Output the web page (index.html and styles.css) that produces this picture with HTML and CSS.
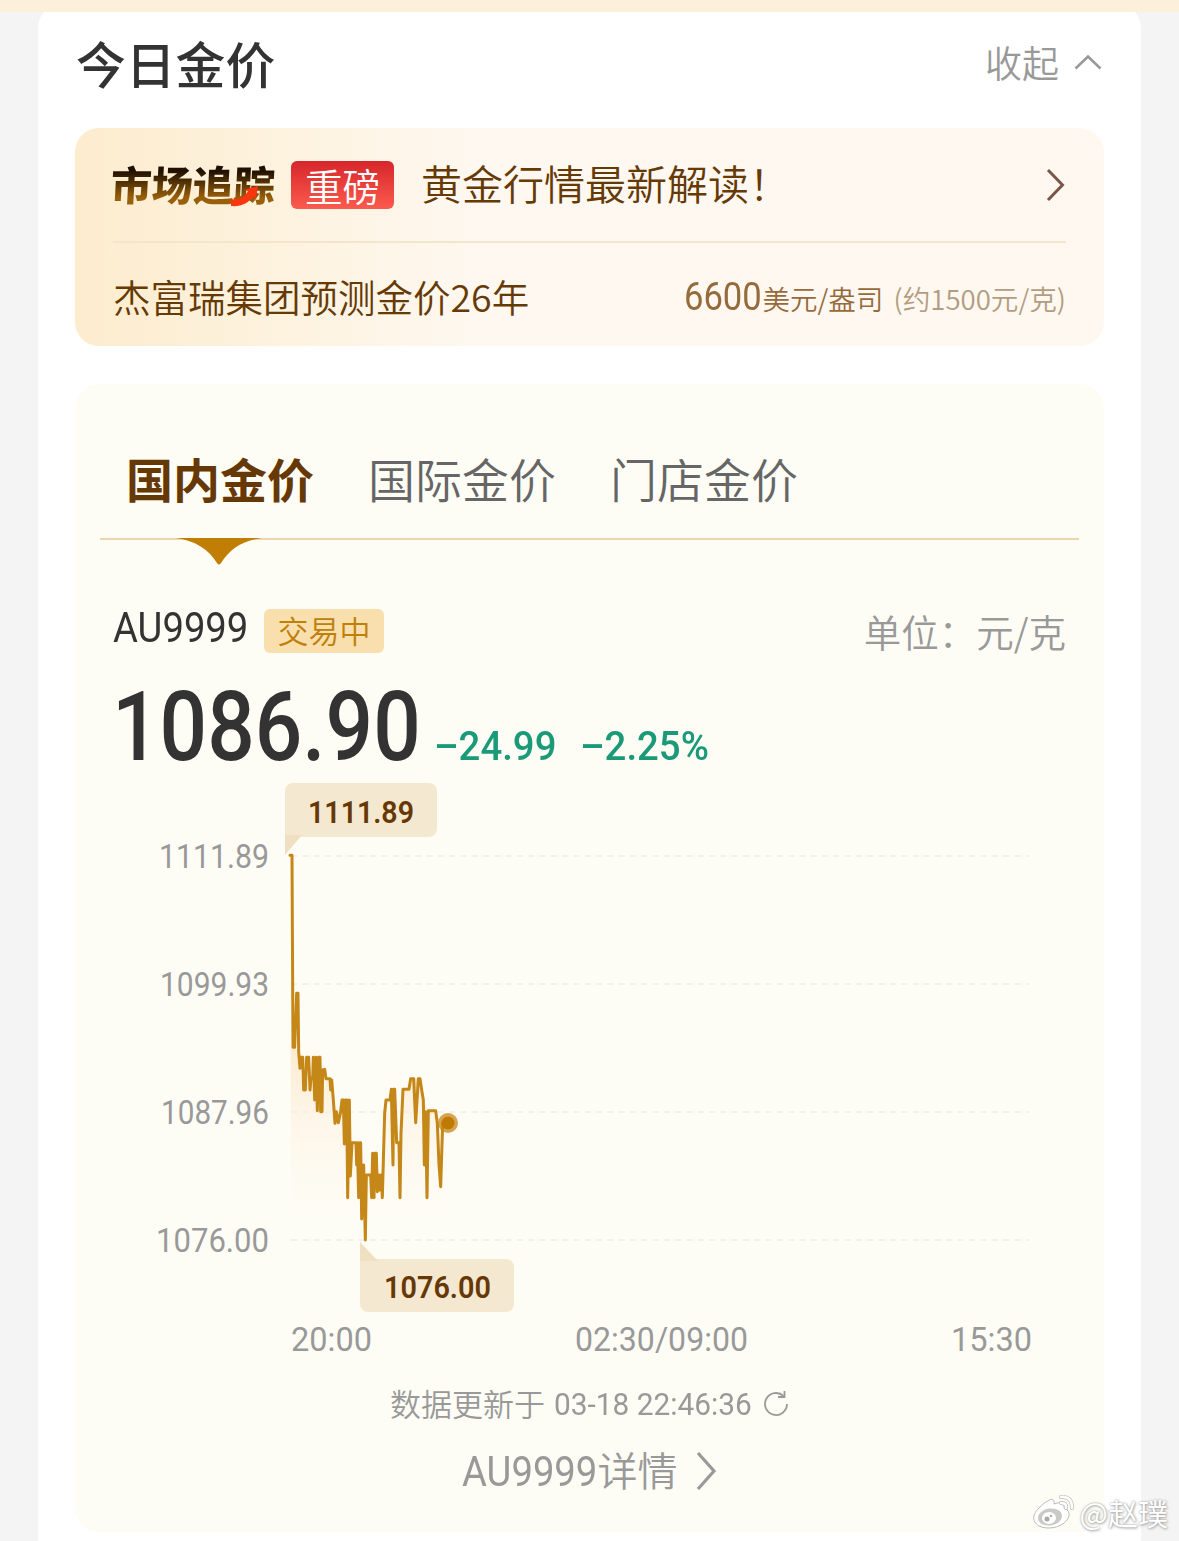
FILE: index.html
```html
<!DOCTYPE html>
<html lang="zh-CN">
<head>
    <meta charset="UTF-8">
    <title>今日金价</title>
    <link rel="stylesheet" href="styles.css">
</head>
<body>
    <div class="top-strip"></div>
    <div class="card">
        <!-- 标题 -->
        <div class="card-header">
            <h1>今日金价</h1>
            <div class="collapse">
                <span>收起</span>
                <svg width="28" height="16" viewBox="0 0 28 16"><path d="M1.5 14.5 14 2.5l12.500 12" fill="none" stroke="#999" stroke-width="2.600"/></svg>
            </div>
        </div>

        <!-- 行情解读 -->
        <div class="banner">
            <div class="banner-top">
                <div class="logo">
                    <span class="logo-text">市场追踪</span>
                    <svg class="logo-arrow" width="29" height="22" viewBox="0 0 29 22"><path d="M1 13c8 1 14-2 17-8l-4-1L28 0l-2 13-3-3c-4 7-12 11-22 10z" fill="#fb3510"/></svg>
                </div>
                <span class="tag">重磅</span>
                <span class="banner-title">黄金行情最新解读！</span>
                <svg class="banner-more" width="20" height="34" viewBox="0 0 20 34"><path d="M2 2l14.500 15L2 32" fill="none" stroke="#7a5646" stroke-width="3"/></svg>
            </div>
            <div class="banner-bottom">
                <span class="forecast">杰富瑞集团预测金价26年</span>
                <div class="forecast-value">
                    <span class="num num-6600"><b>6600</b></span>
                    <span class="usd">美元/盎司</span>
                    <span class="cny">(约1500元/克)</span>
                </div>
            </div>
        </div>

        <!-- 金价面板 -->
        <div class="panel">
            <div class="tabs">
                <span class="tab active">国内金价</span>
                <span class="tab">国际金价</span>
                <span class="tab">门店金价</span>
                <svg class="tab-pointer" width="86" height="27" viewBox="0 0 86 27"><path d="M0 0h86C66 3 54 11 45 25q-2 3-4 0C32 11 20 3 0 0z" fill="#c07e04"/></svg>
            </div>

            <div class="quote-head">
                <span class="num num-code"><b>AU9999</b></span>
                <span class="status">交易中</span>
                <span class="unit">单位：元/克</span>
            </div>
            <div class="quote">
                <span class="num num-price"><b>1086.90</b></span>
                <span class="num num-diff"><b>–24.99</b></span>
                <span class="num num-rate"><b>–2.25%</b></span>
            </div>

            <svg class="chart" width="1029" height="600" viewBox="75 776 1029 600">
                <defs>
                    <linearGradient id="area" x1="0" y1="0" x2="0" y2="1">
                        <stop offset="0" stop-color="#fce3c0" stop-opacity=".7"/>
                        <stop offset=".4" stop-color="#fdeedb" stop-opacity=".55"/>
                        <stop offset="1" stop-color="#fef6ee" stop-opacity=".15"/>
                    </linearGradient>
                </defs>
                <!-- 网格 -->
                <g class="grid">
                    <path d="M291 856h738M291 984h738M291 1112h738M291 1240h738"/>
                </g>
                <!-- 纵轴 -->
                <g class="axis">
                    <text x="159" y="868" textLength="110" lengthAdjust="spacingAndGlyphs">1111.89</text>
                    <text x="160" y="996" textLength="109" lengthAdjust="spacingAndGlyphs">1099.93</text>
                    <text x="161" y="1124" textLength="108" lengthAdjust="spacingAndGlyphs">1087.96</text>
                    <text x="156" y="1252" textLength="113" lengthAdjust="spacingAndGlyphs">1076.00</text>
                    <text x="291" y="1351" textLength="81" lengthAdjust="spacingAndGlyphs">20:00</text>
                    <text x="575" y="1351" textLength="173" lengthAdjust="spacingAndGlyphs">02:30/09:00</text>
                    <text x="951" y="1351" textLength="81" lengthAdjust="spacingAndGlyphs">15:30</text>
                </g>
                <!-- 走势 -->
                <g transform="translate(270 840) scale(.33333)">
                    <path class="area" fill="url(#area)" d="M62 622H74L86 635 90 685 101 750 123 715 152 815 168 716 185 720 195 850 216 780 238 780 246 908 271 908 289 1005 308 940 333 1005 344 820 348 780 380 908 393 880 399 748 417 748 422 716 450 716 460 780 475 812 497 812 512 1040 518 850V1110H62z"/>
                    <path class="line" d="M60 46H66L69 622H74L80 460H84L86 635 90 685 93 652H98L101 750H106L110 652H116L120 750 123 715H128L130 652 134 780 138 652 142 812 146 652H150L152 815H156L158 690 164 688 168 716H180L182 750 185 720 190 780 195 850 199 815 205 848 212 815 216 780H220L223 912 227 780H230L233 1073 238 780 241 1008 246 908H258L260 975 262 908 266 1073 269 908H272L275 1137 281 975 286 1200 289 1005H302L305 1073 308 940 312 1073 315 940H319L322 1055 327 1005 330 1050 333 1005 337 1073 344 820 348 780H360L364 748 369 975 371 748H374L380 908H387L390 1073 393 880 399 748H417L422 716H431L437 848 445 716H450L455 750 460 780 463 975 467 815 471 1073 475 812H497L502 850 507 975 512 1040 518 850H533"/>
                </g>
                <circle cx="448" cy="1123" r="10" fill="#c8861a" fill-opacity=".75"/>
                <circle cx="448" cy="1123" r="6.500" fill="#bf7a04"/>
                <!-- 最高 / 最低 -->
                <g class="tip">
                    <path d="M293 783h136a8 8 0 0 1 8 8v38a8 8 0 0 1-8 8H285v-46a8 8 0 0 1 8-8z"/>
                    <path class="tail" d="M285 835h17l-17 20z"/>
                    <text x="308" y="823" textLength="106" lengthAdjust="spacingAndGlyphs">1111.89</text>
                    <path d="M360 1259h146a8 8 0 0 1 8 8v37a8 8 0 0 1-8 8H368a8 8 0 0 1-8-8z"/>
                    <path class="tail" d="M360 1242l18 19h-18z"/>
                    <text x="384" y="1298" textLength="107" lengthAdjust="spacingAndGlyphs">1076.00</text>
                </g>
            </svg>

            <div class="updated">
                <span class="cn">数据更新于</span>
                <span class="num num-time"><b>03-18 22:46:36</b></span>
                <svg width="26" height="26" viewBox="0 0 26 26" fill="none" stroke="#999" stroke-width="1.800"><path d="M20.500 5A11 11 0 1 0 24 13"/><path d="M21.500 0v6h-6.500"/></svg>
            </div>
            <div class="detail">
                <span class="num num-detail"><b>AU9999</b></span>
                <span class="cn">详情</span>
                <svg width="22" height="40" viewBox="0 0 22 40"><path d="M2 2l16 18L2 38" fill="none" stroke="#999" stroke-width="3.200"/></svg>
            </div>
        </div>
    </div>

    <!-- 水印 -->
    <div class="watermark">
        <svg width="44" height="37" viewBox="0 0 44 37">
            <path d="M16 7c3-3 7-2 6 3 5-2 11-2 10 4 5 2 7 7 3 12-6 8-20 10-28 6-8-5-6-12 0-18 3-3 6-6 9-7z" fill="#fff" stroke="#aaa" stroke-width=".8"/>
            <ellipse cx="18" cy="23" rx="12" ry="8.500" fill="#c9c9c5" transform="rotate(-8 18 23)"/>
            <ellipse cx="17" cy="24" rx="7" ry="6" fill="#fff"/>
            <circle cx="15" cy="25" r="2.500" fill="#aaa"/>
            <circle cx="19" cy="22" r="1.200" fill="#aaa"/>
            <g fill="none" stroke-linecap="round"><path d="M29 3q11-1 11 11M29 9q6 0 5 5" stroke="#bbb" stroke-width="4"/><path d="M29 3q11-1 11 11M29 9q6 0 5 5" stroke="#fff" stroke-width="2.600"/></g>
        </svg>
        <span>@赵璞</span>
    </div>
</body>
</html>
```
FILE: styles.css
```css
* {
    box-sizing: border-box;
}
body {
    margin: 0;
    height: 1541px;
    overflow: hidden;
    position: relative;
    background: #f4f4f4;
    font-family: "Noto Sans CJK SC", sans-serif;
    font-weight: 350;
    color: #333;
}
svg {
    display: block;
    flex: none;
}
span {
    white-space: nowrap;
}
.top-strip {
    position: relative;
    z-index: 1;
    height: 12px;
    background: #fdf0db;
}
.card {
    margin: -8px 38px 0;
    width: 1103px;
    height: 1560px;
    padding: 8px 37px 0;
    border-radius: 24px;
    background: #fff;
}
.card-header {
    display: flex;
    justify-content: space-between;
    align-items: center;
    height: 104px;
    padding: 0 0 5px 1px;
}
h1 {
    margin: 0;
    font-size: 49.8px;
    font-weight: 500;
}
.collapse {
    display: flex;
    align-items: center;
    gap: 15px;
    padding-right: 2px;
    font-size: 37px;
    color: #999;
}

/* 数字统一压窄 */
.num {
    display: inline-block;
    flex: none;
    font-family: Roboto, sans-serif;
}
.num b {
    display: inline-block;
    font-weight: 400;
    transform-origin: left center;
    transform: scaleX(.91);
}

.banner {
    margin-top: 12px;
    height: 218px;
    padding: 0 38px;
    border-radius: 24px;
    background: linear-gradient(90deg, #fdecce 0%, #fdf3e0 22%, #fef8f1 40%, #fef8f1 100%);
    color: #663a05;
}
.banner-top {
    display: flex;
    align-items: center;
    height: 115px;
    border-bottom: 2px solid #f3e6cc;
}
.logo {
    position: relative;
    width: 180px;
    margin-left: -2px;
    padding-bottom: 4px;
    font-size: 41px;
    font-weight: 900;
}
.logo-text {
    display: inline-block;
    background: linear-gradient(180deg, #1f1000 30%, #99600a 75%);
    -webkit-background-clip: text;
    background-clip: text;
    color: transparent;
    transform: skewX(-3deg);
}
.logo-arrow {
    position: absolute;
    left: 119px;
    top: 33px;
}
.tag {
    width: 103px;
    height: 48px;
    line-height: 47px;
    border-radius: 6px;
    background: linear-gradient(180deg, #d7262b, #fb5b4e);
    color: #fff;
    font-size: 37.5px;
    text-align: center;
}
.banner-title {
    margin-left: 27px;
    padding-bottom: 5px;
    font-size: 41px;
}
.banner-more {
    margin-left: auto;
}
.banner-bottom {
    display: flex;
    justify-content: space-between;
    align-items: center;
    height: 103px;
    padding-top: 4px;
}
.forecast {
    padding-bottom: 3px;
    font-size: 37.5px;
}
.forecast-value {
    display: flex;
    align-items: baseline;
    color: #966b3c;
}
.num-6600 {
    width: 79px;
    font-size: 38px;
}
.usd {
    width: 131px;
    font-size: 27.5px;
}
.cny {
    font-size: 27.6px;
    color: #b39d80;
}

.panel {
    margin-top: 38px;
    height: 1148px;
    border-radius: 24px;
    background: #fefdf5;
}
.tabs {
    position: relative;
    display: flex;
    align-items: center;
    gap: 54px;
    height: 156px;
    margin: 0 25px;
    padding: 33px 26px 0;
    border-bottom: 2px solid #ecd6ae;
    font-size: 47px;
    color: #666;
}
.tab.active {
    font-weight: 700;
    color: #663805;
}
.tab-pointer {
    position: absolute;
    left: 76px;
    top: 154px;
}
.quote-head {
    display: flex;
    align-items: center;
    height: 44px;
    margin-top: 69px;
    padding: 0 38px;
}
.num-code {
    width: 151px;
    padding-bottom: 6px;
    font-size: 42px;
    line-height: 36px;
}
.status {
    width: 120px;
    height: 44px;
    line-height: 42px;
    border-radius: 6px;
    background: #f9dfae;
    color: #bf8008;
    font-size: 31px;
    text-align: center;
}
.unit {
    margin-left: auto;
    padding-bottom: 2px;
    font-size: 37.5px;
    color: #999;
}
.quote {
    display: flex;
    align-items: baseline;
    height: 123px;
    padding: 14px 0 0 37px;
    color: #1a9a78;
}
.num-price {
    width: 322px;
    font-size: 96px;
    line-height: 120px;
    color: #333;
}
.num-price b {
    font-weight: 500;
    transform: scaleX(.872);
}
.num-diff {
    width: 146px;
    font-size: 41px;
}
.num-rate {
    font-size: 41px;
}
.num-diff b, .num-rate b {
    font-weight: 500;
    transform: scaleX(.935);
}

.chart {
    font-family: Roboto, sans-serif;
}
.grid path {
    fill: none;
    stroke: #eeeee9;
    stroke-width: 1.5;
    stroke-dasharray: 6 5.3;
}
.axis text {
    font-size: 33px;
    font-weight: 400;
    fill: #999;
}
.line {
    fill: none;
    stroke: #c48718;
    stroke-width: 9;
    stroke-linejoin: round;
    stroke-linecap: round;
}
.tip path {
    fill: #f5e8d0;
}
.tip .tail {
    fill: #f0dfc0;
}
.tip text {
    font-size: 31px;
    font-weight: 600;
    fill: #663805;
}

.updated {
    display: flex;
    align-items: center;
    justify-content: center;
    height: 56px;
    font-size: 31px;
    color: #999;
}
.cn {
    padding-bottom: 4px;
}
.num-time {
    width: 199px;
    margin: 0 10px 0 9px;
}
.num-time b {
    transform: scaleX(.963);
}
.num-detail {
    width: 136px;
    font-size: 42px;
}
.detail {
    display: flex;
    align-items: center;
    justify-content: center;
    height: 78px;
    font-size: 40px;
    color: #999;
}
.detail svg {
    margin-left: 18px;
}

.watermark {
    position: absolute;
    right: 11px;
    bottom: 7px;
    display: flex;
    align-items: center;
    gap: 4px;
    font-size: 30px;
    font-weight: 400;
    line-height: 44px;
    color: #fff;
    text-shadow: 0 0 2px #999, 1px 1px 3px #aaa;
}
```
